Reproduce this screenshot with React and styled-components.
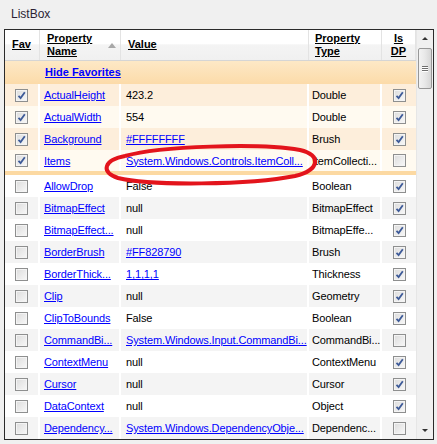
import React from "react";
import styled, { createGlobalStyle } from "styled-components";

const GlobalStyle = createGlobalStyle`
  html, body {
    margin: 0;
    padding: 0;
    background: #f0f0f0;
    font-family: "Liberation Sans", Arial, sans-serif;
    font-size: 11px;
  }
`;

const COLS = "35px 81px 188px 73px 34px";

const Page = styled.div`
  position: relative;
  width: 437px;
  height: 444px;
  box-sizing: border-box;
  padding: 6px 3px 4px 4px;
  display: flex;
  flex-direction: column;
  overflow: hidden;
`;

const Title = styled.div`
  height: 23px;
  padding-left: 7px;
  font-size: 12px;
  line-height: 17px;
  color: #2b1f33;
`;

const Frame = styled.div`
  flex: 1;
  border: 1px solid #2a2a2a;
  display: flex;
  background: #fff;
  overflow: hidden;
`;

const Grid = styled.div`
  width: 411px;
  display: flex;
  flex-direction: column;
`;

const HeaderRow = styled.div`
  display: grid;
  grid-template-columns: ${COLS};
  height: 32px;
  background: linear-gradient(#ffffff 0%, #ffffff 45%, #f4f4f4 50%, #f0f0f0 100%);
  border-bottom: 1px solid #d5d5d5;
  box-sizing: border-box;
`;

const HeadCell = styled.div`
  display: flex;
  align-items: center;
  justify-content: ${(p) => (p.center ? "center" : "flex-start")};
  padding-left: ${(p) => p.pad || 0}px;
  border-right: 1px solid #e3e3e3;
  font-weight: bold;
  color: #000;
  text-decoration: underline;
  line-height: 13px;
  position: relative;
  text-align: ${(p) => (p.center ? "center" : "left")};
`;

const SortArrow = styled.span`
  position: absolute;
  right: 4px;
  top: 13px;
  width: 0;
  height: 0;
  border-left: 4px solid transparent;
  border-right: 4px solid transparent;
  border-bottom: 5px solid #a8a8a8;
`;

const GroupRow = styled.div`
  height: 24px;
  display: flex;
  align-items: center;
  padding-left: 40px;
  background: linear-gradient(#fde8c6, #fcdba9);
  font-weight: bold;
  color: #0000ff;
  text-decoration: underline;
`;

const Row = styled.div`
  display: grid;
  grid-template-columns: ${COLS};
  height: ${(p) => p.h || 22}px;
  background: ${(p) => p.bg};
  flex-shrink: 0;
`;

const Cell = styled.div`
  display: flex;
  align-items: center;
  justify-content: ${(p) => (p.center ? "center" : "flex-start")};
  padding-left: ${(p) => p.pad || 0}px;
  border-right: 2px solid #ffffff;
  white-space: nowrap;
  overflow: hidden;
  letter-spacing: -0.12px;
  color: ${(p) => (p.link ? "#0000ff" : "#000")};
  text-decoration: ${(p) => (p.link ? "underline" : "none")};
  &:last-child {
    border-right: none;
  }
`;

const Separator = styled.div`
  height: 4px;
  background: #fcd9a2;
  flex-shrink: 0;
`;

const Box = styled.span`
  width: 13px;
  height: 13px;
  box-sizing: border-box;
  border: 1px solid #8e8f8f;
  background: linear-gradient(135deg, #dcdcdc, #f8f8f8);
  box-shadow: inset 0 0 0 1px #f4f4f4;
  display: flex;
  align-items: center;
  justify-content: center;
`;

const ScrollBar = styled.div`
  width: 17px;
  display: flex;
  flex-direction: column;
  align-items: center;
  background: #f0f0f0;
  border-left: 1px solid #e6e6e6;
  box-sizing: border-box;
`;

const Arrow = styled.div`
  height: 17px;
  width: 100%;
  display: flex;
  align-items: center;
  justify-content: center;
  &::after {
    content: "";
    width: 0;
    height: 0;
    border-left: 3px solid transparent;
    border-right: 3px solid transparent;
    ${(p) =>
      p.down ? "border-top: 3px solid #333;" : "border-bottom: 3px solid #333;"}
  }
`;

const Thumb = styled.div`
  width: 14px;
  height: 41px;
  margin-top: 1px;
  box-sizing: border-box;
  border: 1px solid #979797;
  border-radius: 2px;
  background: linear-gradient(90deg, #f3f3f3, #e8e8e8 50%, #d6d6d6);
  display: flex;
  flex-direction: column;
  align-items: center;
  justify-content: center;
  gap: 1px;
`;

const Grip = styled.span`
  width: 6px;
  height: 1px;
  background: #6e6e6e;
  box-shadow: 0 1px 0 #fff;
`;

const Spacer = styled.div`
  flex: 1;
`;

const Ellipse = styled.svg`
  position: absolute;
  left: 0;
  top: 0;
  pointer-events: none;
`;

const Check = ({ on }) => (
  <Box>
    {on && (
      <svg width="9" height="9" viewBox="0 0 9 9">
        <path d="M1.5 4.8 L3.6 7 L7.8 1.2" fill="none" stroke="#3d5a98" strokeWidth="1.8" />
      </svg>
    )}
  </Box>
);

const favorites = [
  { fav: true, name: "ActualHeight", value: "423.2", type: "Double", dp: true },
  { fav: true, name: "ActualWidth", value: "554", type: "Double", dp: true },
  { fav: true, name: "Background", value: "#FFFFFFFF", link: true, type: "Brush", dp: true },
  { fav: true, name: "Items", value: "System.Windows.Controls.ItemColl...", link: true, type: "ItemCollecti...", dp: false },
];

const others = [
  { name: "AllowDrop", value: "False", type: "Boolean", dp: true },
  { name: "BitmapEffect", value: "null", type: "BitmapEffect", dp: true },
  { name: "BitmapEffect...", value: "null", type: "BitmapEffe...", dp: true },
  { name: "BorderBrush", value: "#FF828790", link: true, type: "Brush", dp: true },
  { name: "BorderThick...", value: "1,1,1,1", link: true, type: "Thickness", dp: true },
  { name: "Clip", value: "null", type: "Geometry", dp: true },
  { name: "ClipToBounds", value: "False", type: "Boolean", dp: true },
  { name: "CommandBi...", value: "System.Windows.Input.CommandBi...", link: true, type: "CommandBi...", dp: false },
  { name: "ContextMenu", value: "null", type: "ContextMenu", dp: true },
  { name: "Cursor", value: "null", type: "Cursor", dp: true },
  { name: "DataContext", value: "null", type: "Object", dp: true },
  { name: "Dependency...", value: "System.Windows.DependencyObje...", link: true, type: "Dependenc...", dp: false },
];

const PropRow = ({ item, bg, h }) => (
  <Row bg={bg} h={h}>
    <Cell center>
      <Check on={!!item.fav} />
    </Cell>
    <Cell link pad={4}>{item.name}</Cell>
    <Cell link={item.link} pad={5}>{item.value}</Cell>
    <Cell pad={3}>{item.type}</Cell>
    <Cell center>
      <Check on={item.dp} />
    </Cell>
  </Row>
);

export default function App() {
  return (
    <>
      <GlobalStyle />
      <Page>
        <Title>ListBox</Title>
        <Frame>
          <Grid>
            <HeaderRow>
              <HeadCell pad={7}>Fav</HeadCell>
              <HeadCell pad={7}>
                Property
                <br />
                Name
                <SortArrow />
              </HeadCell>
              <HeadCell pad={7}>Value</HeadCell>
              <HeadCell pad={6}>
                Property
                <br />
                Type
              </HeadCell>
              <HeadCell center>
                Is
                <br />
                DP
              </HeadCell>
            </HeaderRow>
            <GroupRow>Hide Favorites</GroupRow>
            {favorites.map((item, i) => (
              <PropRow
                key={item.name}
                item={item}
                h={i === 3 ? 21 : 22}
                bg={i % 2 === 0 ? "#fdeedb" : "#fffaf0"}
              />
            ))}
            <Separator />
            {others.map((item, i) => (
              <PropRow key={item.name} item={item} bg={i % 2 === 0 ? "#ffffff" : "#f4f4f4"} />
            ))}
          </Grid>
          <ScrollBar>
            <Arrow />
            <Thumb>
              <Grip />
              <Grip />
              <Grip />
            </Thumb>
            <Spacer />
            <Arrow down />
          </ScrollBar>
        </Frame>
        <Ellipse width="437" height="444">
          <path
            d="M125 156 C 160 146, 260 143, 300 150 C 322 155, 320 170, 295 176 C 250 185, 150 186, 118 178 C 100 172, 104 160, 125 156"
            fill="none"
            stroke="#e3141c"
            strokeWidth="4"
          />
        </Ellipse>
      </Page>
    </>
  );
}
